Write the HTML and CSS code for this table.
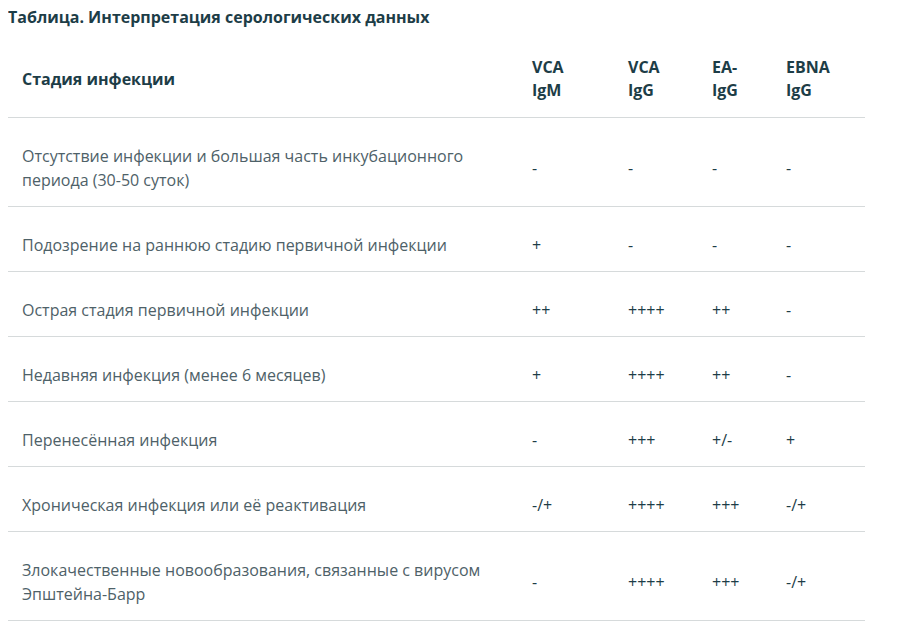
FILE: index.html
```html
<!DOCTYPE html>
<html lang="ru">
<head>
<meta charset="utf-8">
<link rel="stylesheet" href="styles.css">
</head>
<body>
<div class="caption">Таблица. Интерпретация серологических данных</div>
<table class="sero">
  <colgroup>
    <col class="c-stage"><col class="c-a"><col class="c-b"><col class="c-c"><col class="c-d">
  </colgroup>
  <thead>
    <tr>
      <th>Стадия инфекции</th>
      <th>VCA<br>IgM</th>
      <th>VCA<br>IgG</th>
      <th>EA-<br>IgG</th>
      <th>EBNA<br>IgG</th>
    </tr>
  </thead>
  <tbody>
    <tr><td class="stage">Отсутствие инфекции и большая часть инкубационного периода (30-50 суток)</td><td>-</td><td>-</td><td>-</td><td>-</td></tr>
    <tr><td class="stage">Подозрение на раннюю стадию первичной инфекции</td><td>+</td><td>-</td><td>-</td><td>-</td></tr>
    <tr><td class="stage">Острая стадия первичной инфекции</td><td>++</td><td>++++</td><td>++</td><td>-</td></tr>
    <tr><td class="stage">Недавняя инфекция (менее 6 месяцев)</td><td>+</td><td>++++</td><td>++</td><td>-</td></tr>
    <tr><td class="stage">Перенесённая инфекция</td><td>-</td><td>+++</td><td>+/-</td><td>+</td></tr>
    <tr><td class="stage">Хроническая инфекция или её реактивация</td><td>-/+</td><td>++++</td><td>+++</td><td>-/+</td></tr>
    <tr><td class="stage">Злокачественные новообразования, связанные с вирусом Эпштейна-Барр</td><td>-</td><td>++++</td><td>+++</td><td>-/+</td></tr>
  </tbody>
</table>
</body>
</html>
```
FILE: styles.css
```css
body {
  margin: 8px;
  background: #fff;
  font-family: "Open Sans", "Liberation Sans", sans-serif;
  color: #1d3d47;
}
.caption {
  font-size: 16px;
  font-weight: 700;
  line-height: 18px;
  color: #1d3d47;
  margin-bottom: 5px;
}
.sero {
  width: 857px;
  border-collapse: collapse;
  table-layout: fixed;
}
.c-stage { width: 510px; }
.c-a { width: 96px; }
.c-b { width: 84px; }
.c-c { width: 74px; }
.c-d { width: 93px; }
.sero th {
  text-align: left;
  font-size: 16px;
  font-weight: 700;
  line-height: 23px;
  color: #1d3d47;
  padding: 25px 14px 15px;
  border-bottom: 1px solid #d6dadb;
  vertical-align: middle;
}
.sero td {
  font-size: 16px;
  line-height: 24px;
  color: #1d3d47;
  padding: 26px 14px 14px;
  border-bottom: 1px solid #d6dadb;
  vertical-align: middle;
}
.sero td.stage {
  color: #4e6168;
}
```
